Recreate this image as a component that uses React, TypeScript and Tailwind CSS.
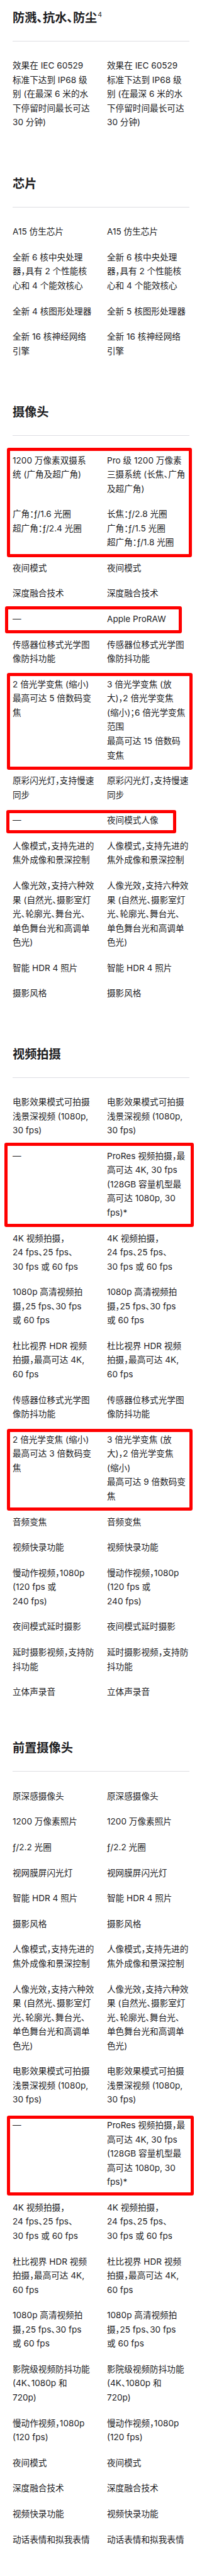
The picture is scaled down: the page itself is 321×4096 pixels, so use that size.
import React from "react";

type Row = { l: string[]; r?: string[] };
type Item = { rows: Row[]; box?: string };

const PR = ["ProRes 视频拍摄，最", "高可达 4K, 30 fps", "(128GB 容量机型最", "高可达 1080p, 30", "fps)*"];
const LIGHT = ["人像光效，支持六种效", "果 (自然光、摄影室灯", "光、轮廓光、舞台光、", "单色舞台光和高调单", "色光)"];
const CINE = ["电影效果模式可拍摄", "浅景深视频 (1080p,", "30 fps)"];
const K4 = ["4K 视频拍摄，", "24 fps、25 fps、", "30 fps 或 60 fps"];
const HD = ["1080p 高清视频拍", "摄，25 fps、30 fps", "或 60 fps"];
const DOLBY = ["杜比视界 HDR 视频", "拍摄，最高可达 4K,", "60 fps"];
const OIS = ["传感器位移式光学图", "像防抖功能"];
const PORTRAIT = ["人像模式，支持先进的", "焦外成像和景深控制"];

const s = (...l: string[]): Item => ({ rows: [{ l }] });

type Section = { title: string; sup?: string; mt: string; items: Item[] };

const sections: Section[] = [
  {
    title: "防溅、抗水、防尘",
    sup: "4",
    mt: "mt-[13.7px]",
    items: [s("效果在 IEC 60529", "标准下达到 IP68 级", "别 (在最深 6 米的水", "下停留时间最长可达", "30 分钟)")],
  },
  {
    title: "芯片",
    mt: "mt-[71.7px]",
    items: [
      s("A15 仿生芯片"),
      s("全新 6 核中央处理", "器，具有 2 个性能核", "心和 4 个能效核心"),
      { rows: [{ l: ["全新 4 核图形处理器"], r: ["全新 5 核图形处理器"] }] },
      s("全新 16 核神经网络", "引擎"),
    ],
  },
  {
    title: "摄像头",
    mt: "mt-[71.7px]",
    items: [
      {
        rows: [
          { l: ["1200 万像素双摄系", "统 (广角及超广角)"], r: ["Pro 级 1200 万像素", "三摄系统 (长焦、广角", "及超广角)"] },
          { l: ["广角：ƒ/1.6 光圈", "超广角：ƒ/2.4 光圈"], r: ["长焦：ƒ/2.8 光圈", "广角：ƒ/1.5 光圈", "超广角：ƒ/1.8 光圈"] },
        ],
        box: "top-[-8.4px] bottom-[-12.1px] left-[-9.5px] right-[-3.7px]",
      },
      s("夜间模式"),
      s("深度融合技术"),
      { rows: [{ l: ["—"], r: ["Apple ProRAW"] }], box: "top-[-9.5px] bottom-[-11.6px] left-[-12.4px] right-[11.8px]" },
      s(...OIS),
      {
        rows: [
          {
            l: ["2 倍光学变焦 (缩小)", "最高可达 5 倍数码变", "焦"],
            r: ["3 倍光学变焦 (放", "大)，2 倍光学变焦", "(缩小)；6 倍光学变焦", "范围", "最高可达 15 倍数码", "变焦"],
          },
        ],
        box: "top-[-7.3px] bottom-[-12px] left-[-9.5px] right-[-5.3px]",
      },
      s("原彩闪光灯，支持慢速", "同步"),
      { rows: [{ l: ["—"], r: ["夜间模式人像"] }], box: "top-[-5.3px] bottom-[-8.8px] left-[-9.9px] right-[20.9px]" },
      s(...PORTRAIT),
      s(...LIGHT),
      s("智能 HDR 4 照片"),
      s("摄影风格"),
    ],
  },
  {
    title: "视频拍摄",
    mt: "mt-[70.6px]",
    items: [
      s(...CINE),
      { rows: [{ l: ["—"], r: PR }], box: "top-[-9.5px] bottom-[-11.6px] left-[-13px] right-[-6.9px]" },
      s(...K4),
      s(...HD),
      s(...DOLBY),
      s(...OIS),
      {
        rows: [
          {
            l: ["2 倍光学变焦 (缩小)", "最高可达 3 倍数码变", "焦"],
            r: ["3 倍光学变焦 (放", "大)，2 倍光学变焦", "(缩小)", "最高可达 9 倍数码变", "焦"],
          },
        ],
        box: "top-[-6.2px] bottom-[-11.2px] left-[-8.9px] right-[-5.3px]",
      },
      s("音频变焦"),
      s("视频快录功能"),
      s("慢动作视频，1080p", "(120 fps 或", "240 fps)"),
      s("夜间模式延时摄影"),
      s("延时摄影视频，支持防", "抖功能"),
      s("立体声录音"),
    ],
  },
  {
    title: "前置摄像头",
    mt: "mt-[63.6px]",
    items: [
      s("原深感摄像头"),
      s("1200 万像素照片"),
      s("ƒ/2.2 光圈"),
      s("视网膜屏闪光灯"),
      s("智能 HDR 4 照片"),
      s("摄影风格"),
      s(...PORTRAIT),
      s(...LIGHT),
      s(...CINE),
      { rows: [{ l: ["—"], r: PR }], box: "top-[-4px] bottom-[-10.1px] left-[-8.9px] right-[-7.1px]" },
      s(...K4),
      s(...DOLBY),
      s(...HD),
      s("影院级视频防抖功能", "(4K、1080p 和", "720p)"),
      s("慢动作视频，1080p", "(120 fps)"),
      s("夜间模式"),
      s("深度融合技术"),
      s("视频快录功能"),
      s("动话表情和拟我表情"),
    ],
  },
];

function Cell({ lines }: { lines: string[] }) {
  return (
    <div>
      {lines.map((t, i) => (
        <div key={i} className="whitespace-nowrap">
          {t}
        </div>
      ))}
    </div>
  );
}

function RowView({ row }: { row: Row }) {
  return (
    <div className="grid grid-cols-[131px_131px] gap-x-[19px]">
      <Cell lines={row.l} />
      <Cell lines={row.r ?? row.l} />
    </div>
  );
}

function ItemView({ item }: { item: Item }) {
  return (
    <div className="relative flex flex-col gap-[18.05px]">
      {item.rows.map((r, i) => (
        <RowView key={i} row={r} />
      ))}
      {item.box && (
        <div
          className={`pointer-events-none absolute rounded-[3px] border-[5.3px] border-[#ff0000] ${item.box}`}
        />
      )}
    </div>
  );
}

export default function App() {
  return (
    <div className="w-[321px] bg-white px-[20px] pb-[40px] text-[#1d1d1f] font-['Inter','Noto_Sans_CJK_SC',sans-serif] [font-feature-settings:'halt'] overflow-hidden">
      {sections.map((sec, si) => (
        <section key={si} className={sec.mt}>
          <h2 className="h-[28px] whitespace-nowrap text-[19.2px] leading-[28px] font-semibold">
            {sec.title}
            {sec.sup && (
              <span className="relative top-[5.6px] ml-[1px] align-top text-[10.5px] leading-none font-normal">
                {sec.sup}
              </span>
            )}
          </h2>
          <div className="mt-[23.2px] h-px bg-[#dedee3]" />
          <div className="mt-[27.4px] flex flex-col gap-[18.05px] text-[13.62px] leading-[22.55px]">
            {sec.items.map((it, i) => (
              <ItemView key={i} item={it} />
            ))}
          </div>
        </section>
      ))}
    </div>
  );
}
